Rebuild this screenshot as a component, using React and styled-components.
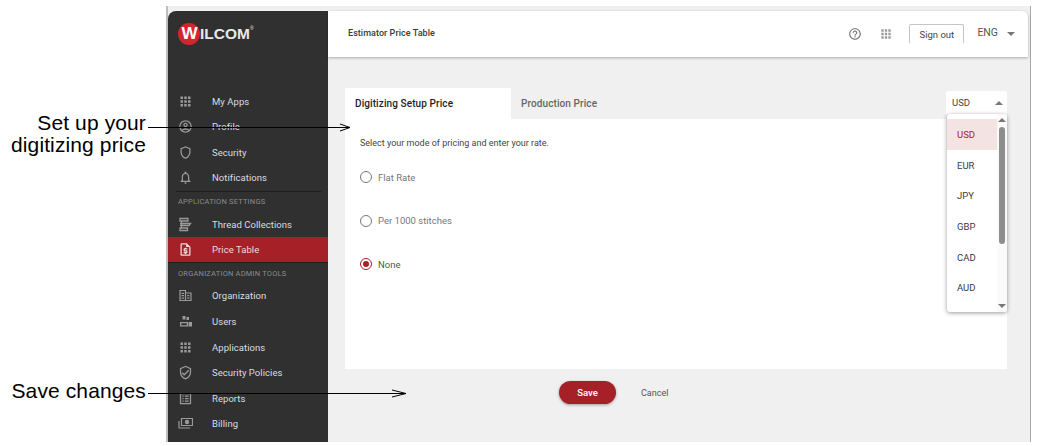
import styled, { createGlobalStyle } from "styled-components";
import {
  MdApps,
  MdOutlineAccountCircle,
  MdOutlineShield,
  MdOutlineNotifications,
  MdOutlineRequestQuote,
  MdOutlineVerifiedUser,
  MdOutlineListAlt,
  MdHelpOutline,
} from "react-icons/md";

const GlobalStyle = createGlobalStyle`
  html, body {
    margin: 0;
    padding: 0;
    background: #fff;
  }
  * {
    box-sizing: border-box;
  }
`;

const Page = styled.div`
  position: relative;
  width: 1038px;
  height: 446px;
  overflow: hidden;
  padding: 6px 0 0 166px;
  font-family: Roboto, "Liberation Sans", sans-serif;
`;

const Frame = styled.div`
  width: 865px;
  height: 436px;
  display: flex;
  padding: 5px 2px 0 0;
  background: #f0f0f0;
  border-left: 2px solid #bdbdbd;
  border-right: 1px solid #a8a8a8;
`;

// Sidebar
const Sidebar = styled.aside`
  width: 160px;
  flex-shrink: 0;
  background: #303030;
  border-top-left-radius: 8px;
  overflow: hidden;
`;

const LogoArea = styled.div`
  height: 77.4px;
  padding: 12px 0 0 10px;
  display: flex;
  align-items: flex-start;
`;

const LogoMark = styled.div`
  width: 22px;
  height: 22px;
  border-radius: 50%;
  background: #d5252c;
  color: #fff;
  font: 900 17px/22px "Liberation Sans", sans-serif;
  text-align: center;
  letter-spacing: -1px;
`;

const LogoText = styled.div`
  color: #e8e8e8;
  font: 700 15.5px/22px "Liberation Sans", sans-serif;

  sup {
    font-size: 5px;
    font-weight: 400;
    vertical-align: 9px;
    line-height: 0;
  }
`;

const NavRow = styled.div`
  height: 25.6px;
  display: flex;
  align-items: center;
  padding-left: 9.5px;
  font-size: 9.5px;
  font-weight: 400;
  letter-spacing: 0.05px;
  background: ${(props) => (props.$active ? "#a52127" : "transparent")};
  color: ${(props) => (props.$active ? "#f2d9da" : "#d8dde3")};
  border-bottom: ${(props) => (props.$active ? "1px solid #1d1d1d" : "0")};

  svg {
    width: 15px;
    height: 15px;
    flex-shrink: 0;
    color: ${(props) => (props.$active ? "#f0dcdc" : "#9a9a9a")};
  }
`;

const NavLabel = styled.span`
  margin-left: 19.5px;
`;

const SectionLabel = styled.div`
  height: 20.6px;
  margin: 0 7px 0 8px;
  padding: ${(props) => (props.$first ? "4px 0 0 2px" : "5px 0 0 2px")};
  border-top: ${(props) => (props.$first ? "1px solid #1d1d1d" : "0")};
  font-size: 7.5px;
  line-height: 11px;
  letter-spacing: 0.2px;
  color: #8c8c8c;
  white-space: nowrap;
`;

// Main column
const Main = styled.main`
  flex: 1;
  min-width: 0;
  display: flex;
  flex-direction: column;
`;

const Header = styled.header`
  height: 46px;
  flex-shrink: 0;
  display: flex;
  align-items: center;
  padding: 0 13px 0 20px;
  background: #fff;
  border-top-right-radius: 6px;
  box-shadow: 0 1px 3px rgba(0, 0, 0, 0.3);
`;

const HeaderTitle = styled.div`
  flex: 1;
  margin-top: -2px;
  font-size: 9px;
  font-weight: 500;
  letter-spacing: 0.05px;
  color: #3a3a3a;
`;

const HeaderIcon = styled.span`
  display: flex;
  margin-right: ${(props) => props.$gap}px;
  color: ${(props) => props.$color};

  svg {
    width: 14px;
    height: 14px;
  }
`;

const SignOut = styled.button`
  width: 55px;
  height: 20px;
  padding: 0;
  margin-right: 13px;
  background: #fff;
  border: 1px solid #c4c4c4;
  border-bottom-color: #fff;
  border-radius: 2px;
  font: 400 9.5px Roboto, sans-serif;
  color: #444;
`;

const Lang = styled.span`
  font-size: 10.5px;
  color: #555;
  margin: -4px 9px 0 0;
`;

const Caret = styled.span`
  width: 0;
  height: 0;
  border-left: 4px solid transparent;
  border-right: 4px solid transparent;
  border-top: ${(props) => (props.$up ? "0" : "4px solid #777")};
  border-bottom: ${(props) => (props.$up ? "4px solid #777" : "0")};
`;

const Content = styled.div`
  flex: 1;
  padding: 31px 21px 0 17px;
`;

const TabBar = styled.div`
  position: relative;
  height: 31px;
  display: flex;
`;

const Tab = styled.div`
  width: ${(props) => (props.$active ? "166px" : "auto")};
  display: flex;
  align-items: center;
  padding-left: 10px;
  font-size: 10px;
  font-weight: 500;
  letter-spacing: 0.1px;
  color: ${(props) => (props.$active ? "#1f1f1f" : "#666")};
  background: ${(props) => (props.$active ? "#fff" : "transparent")};
`;

const Select = styled.div`
  position: absolute;
  right: 0;
  top: 3px;
  width: 61px;
  height: 23px;
  display: flex;
  align-items: center;
  justify-content: space-between;
  padding: 0 4px 0 6px;
  background: #fff;
  border-radius: 2px 2px 0 0;
  font-size: 9.5px;
  color: #444;
`;

const Dropdown = styled.div`
  position: absolute;
  right: 0;
  top: 26px;
  width: 60px;
  height: 198px;
  display: flex;
  padding-top: 5px;
  background: #fff;
  border-radius: 3px;
  box-shadow: 0 1px 4px rgba(0, 0, 0, 0.4);
  z-index: 2;
`;

const Options = styled.div`
  flex: 1;
`;

const Option = styled.div`
  height: 30.7px;
  display: flex;
  align-items: center;
  padding-left: 10px;
  font-size: 9.5px;
  color: ${(props) => (props.$selected ? "#a52127" : "#3a3a3a")};
  background: ${(props) => (props.$selected ? "#f4e3e3" : "transparent")};
`;

const Scrollbar = styled.div`
  width: 10px;
  margin-top: -5px;
  display: flex;
  flex-direction: column;
  align-items: center;
  padding: 4px 0;
  background: #fafafa;
  border-radius: 0 3px 3px 0;
`;

const ScrollThumb = styled.div`
  width: 6px;
  height: 117px;
  margin: 5px 0 auto;
  background: #8e8e8e;
  border-radius: 3px;
`;

const Panel = styled.section`
  height: 250px;
  padding: 19px 15px;
  background: #fff;
`;

const Hint = styled.p`
  margin: 0 0 6.5px;
  font-size: 9px;
  line-height: 11px;
  color: #444;
`;

const RadioRow = styled.div`
  height: 43.5px;
  display: flex;
  align-items: center;
  font-size: 9.5px;
  color: ${(props) => (props.$checked ? "#555" : "#777")};
`;

const RadioDot = styled.span`
  width: 12px;
  height: 12px;
  margin-right: 6px;
  display: flex;
  align-items: center;
  justify-content: center;
  border-radius: 50%;
  border: 1px solid ${(props) => (props.$checked ? "#a52127" : "#777")};

  &::after {
    content: "";
    width: 6px;
    height: 6px;
    border-radius: 50%;
    background: ${(props) => (props.$checked ? "#a52127" : "transparent")};
  }
`;

const Actions = styled.div`
  display: flex;
  align-items: center;
  padding: 12px 0 0 214px;
`;

const SaveButton = styled.button`
  width: 57px;
  height: 23px;
  padding: 0;
  border: 0;
  border-radius: 12px;
  background: #a52127;
  color: #fff;
  font: 500 9.5px Roboto, sans-serif;
  box-shadow: 0 1px 3px rgba(0, 0, 0, 0.35);
`;

const CancelLink = styled.span`
  margin-left: 25px;
  font-size: 9px;
  color: #555;
`;

// Callouts laid over the screenshot
const Callout = styled.div`
  position: absolute;
  right: ${(props) => 1038 - props.$right}px;
  top: ${(props) => props.$top}px;
  font: 400 21px/22px "Liberation Sans", sans-serif;
  letter-spacing: 0.12px;
  color: #000;
  text-align: right;
  white-space: nowrap;
`;

const CalloutLines = styled.svg`
  position: absolute;
  left: 0;
  top: 0;
  pointer-events: none;
  z-index: 3;
`;

const ThreadIcon = () => (
  <svg viewBox="0 0 15 15" fill="none" stroke="currentColor" strokeWidth="1.3">
    <path d="M2 1.500h8v2.500H2zM3.500 4v7.500M2 6.500h10.500l-1.500 2H2M2 11h7.500v2.500H2z" />
  </svg>
);

const OrganizationIcon = () => (
  <svg viewBox="0 0 15 15" fill="none" stroke="currentColor" strokeWidth="1.2">
    <path d="M2 2.500h5.500v10H2zM7.500 5H13v7.500H7.500zM3.500 5.300H6M3.500 7.700H6M3.500 10.100H6M9.200 7.700h2.200M9.200 10.100h2.200" />
  </svg>
);

const UsersIcon = () => (
  <svg viewBox="0 0 15 15" fill="currentColor">
    <path d="M4.500 2h3v3.500h-3zM8.500 3h2.500v3H8.500z" />
    <path d="M2 8h8v4.500H2zM3.300 9.200v2.100h5.400V9.200zM10.500 8H14v4.500h-3.500z" fillRule="evenodd" />
  </svg>
);

const BillingIcon = () => (
  <svg viewBox="0 0 15 15" fill="none" stroke="currentColor" strokeWidth="1.2">
    <path d="M3.500 2.500h11v7h-11zM1 5v7h11" />
    <circle cx="9" cy="6" r="2.200" fill="currentColor" stroke="none" />
  </svg>
);

const topItems = [
  { label: "My Apps", icon: <MdApps /> },
  { label: "Profile", icon: <MdOutlineAccountCircle /> },
  { label: "Security", icon: <MdOutlineShield /> },
  { label: "Notifications", icon: <MdOutlineNotifications /> },
];

const settingItems = [
  { label: "Thread Collections", icon: <ThreadIcon /> },
  { label: "Price Table", icon: <MdOutlineRequestQuote />, active: true },
];

const adminItems = [
  { label: "Organization", icon: <OrganizationIcon /> },
  { label: "Users", icon: <UsersIcon /> },
  { label: "Applications", icon: <MdApps /> },
  { label: "Security Policies", icon: <MdOutlineVerifiedUser /> },
  { label: "Reports", icon: <MdOutlineListAlt /> },
  { label: "Billing", icon: <BillingIcon /> },
];

const currencies = ["USD", "EUR", "JPY", "GBP", "CAD", "AUD"];

const renderItems = (items) =>
  items.map((item) => (
    <NavRow key={item.label} $active={item.active}>
      {item.icon}
      <NavLabel>{item.label}</NavLabel>
    </NavRow>
  ));

const App = () => {
  return (
    <Page>
      <GlobalStyle />
      <Frame>
        <Sidebar>
          <LogoArea>
            <LogoMark>W</LogoMark>
            <LogoText>
              ILCOM<sup>®</sup>
            </LogoText>
          </LogoArea>
          {renderItems(topItems)}
          <SectionLabel $first>APPLICATION SETTINGS</SectionLabel>
          {renderItems(settingItems)}
          <SectionLabel>ORGANIZATION ADMIN TOOLS</SectionLabel>
          {renderItems(adminItems)}
        </Sidebar>

        <Main>
          <Header>
            <HeaderTitle>Estimator Price Table</HeaderTitle>
            <HeaderIcon $gap={17} $color="#777">
              <MdHelpOutline />
            </HeaderIcon>
            <HeaderIcon $gap={16} $color="#999">
              <MdApps />
            </HeaderIcon>
            <SignOut>Sign out</SignOut>
            <Lang>ENG</Lang>
            <Caret />
          </Header>

          <Content>
            <TabBar>
              <Tab $active>Digitizing Setup Price</Tab>
              <Tab>Production Price</Tab>
              <Select>
                USD
                <Caret $up />
              </Select>
              <Dropdown>
                <Options>
                  {currencies.map((code) => (
                    <Option key={code} $selected={code === "USD"}>
                      {code}
                    </Option>
                  ))}
                </Options>
                <Scrollbar>
                  <Caret $up />
                  <ScrollThumb />
                  <Caret />
                </Scrollbar>
              </Dropdown>
            </TabBar>

            <Panel>
              <Hint>Select your mode of pricing and enter your rate.</Hint>
              <RadioRow>
                <RadioDot />
                Flat Rate
              </RadioRow>
              <RadioRow>
                <RadioDot />
                Per 1000 stitches
              </RadioRow>
              <RadioRow $checked>
                <RadioDot $checked />
                None
              </RadioRow>
            </Panel>

            <Actions>
              <SaveButton>Save</SaveButton>
              <CancelLink>Cancel</CancelLink>
            </Actions>
          </Content>
        </Main>
      </Frame>

      <Callout $right={146} $top={112}>
        Set up your
        <br />
        digitizing price
      </Callout>
      <Callout $right={146} $top={380}>
        Save changes
      </Callout>
      <CalloutLines width="1038" height="446" fill="none" stroke="#000">
        <path d="M148 127.500H350M340 124l10 3.500-10 3.500" />
        <path d="M148 393.500H406M392 390l14 3.500-14 3.500" />
      </CalloutLines>
    </Page>
  );
};

export default App;
